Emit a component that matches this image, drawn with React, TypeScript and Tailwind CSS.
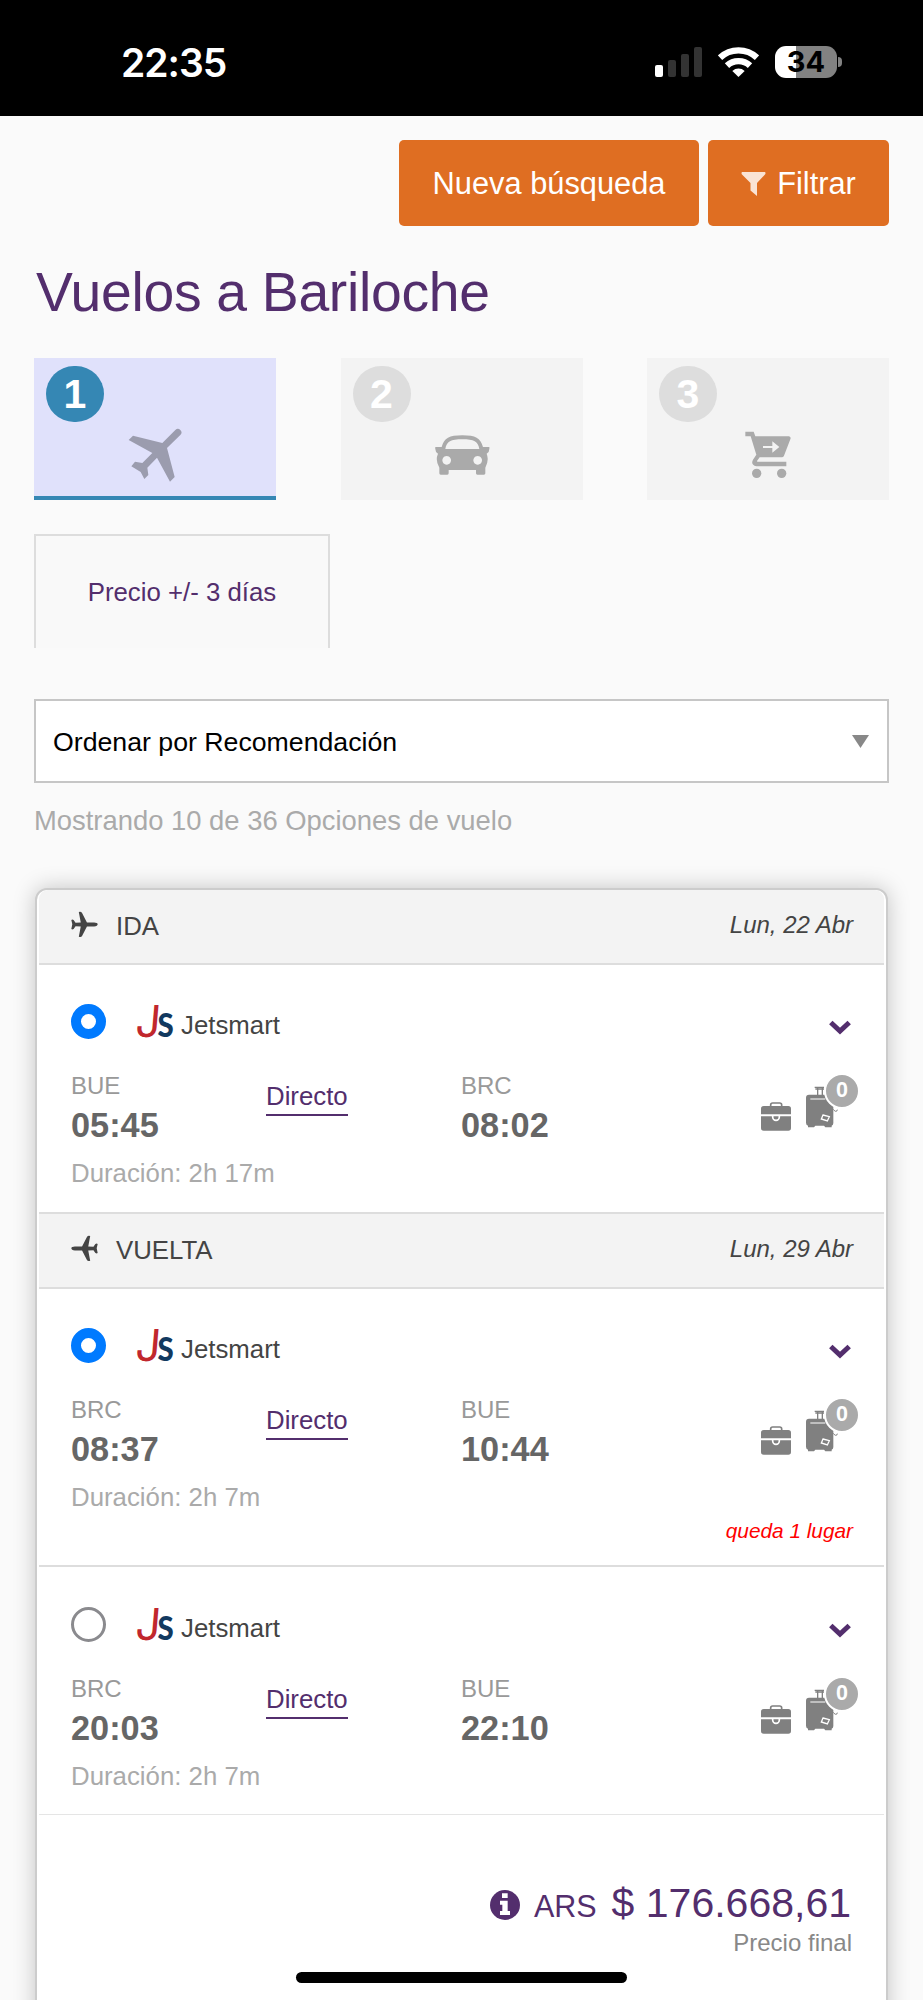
import React from 'react';

interface Flight {
  from: string;
  to: string;
  departs: string;
  arrives: string;
  duration: string;
  selected: boolean;
  seats?: string;
}

const outbound: Flight[] = [
  { from: 'BUE', to: 'BRC', departs: '05:45', arrives: '08:02', duration: '2h 17m', selected: true },
];

const inbound: Flight[] = [
  { from: 'BRC', to: 'BUE', departs: '08:37', arrives: '10:44', duration: '2h 7m', selected: true, seats: 'queda 1 lugar' },
  { from: 'BRC', to: 'BUE', departs: '20:03', arrives: '22:10', duration: '2h 7m', selected: false },
];

const StatusBar = () => (
  <div className="flex h-[116px] items-start bg-black pl-[121px] pr-[81px]">
    <span className="mt-[41px] font-['Inter',sans-serif] text-[39px] leading-[44px] font-semibold tracking-[-1px] text-white">
      22:35
    </span>
    <div className="mt-[46px] ml-auto flex items-start">
      <svg width="47" height="32" viewBox="0 0 47 32" className="mr-[16px]">
        <rect x="0" y="19" width="8" height="12" rx="2" fill="#fff" />
        <rect x="13" y="14" width="8" height="17" rx="2" fill="#333" />
        <rect x="26" y="8" width="8" height="23" rx="2" fill="#333" />
        <rect x="39" y="1" width="8" height="30" rx="2" fill="#333" />
      </svg>
      <svg width="41" height="32" viewBox="0 0 123 96" className="mr-[16px]">
        <g fill="none" stroke="#fff" strokeWidth="19">
          <path d="M6 36 A81 81 0 0 1 117 36" transform="translate(0 -1)" />
          <path d="M27 59 A50 50 0 0 1 96 59" />
        </g>
        <path d="M61.500 93 L43 75 A27 27 0 0 1 80 75 Z" fill="#fff" />
      </svg>
      <div className="flex h-[32px] w-[62px] items-center justify-center rounded-[11px] bg-[linear-gradient(90deg,#fff_21px,#828282_21px)] font-['Inter',sans-serif] text-[29px] leading-[32px] font-bold text-black">
        34
      </div>
      <div className="mt-[11px] ml-[1px] h-[10px] w-[4px] rounded-r-full bg-[#828282]" />
    </div>
  </div>
);

const PlaneIcon = () => (
  <svg width="54" height="54" viewBox="385 262 162 162" fill="currentColor">
    <path d="M387 298 L400 285 L488 307 L527 268 A10.500 10.500 0 0 1 542 283 L502 322 L525 409 L511 423 L472 351 L443 381 L446 403 L434 415 L423 394 L395 377 L406 363 L428 367 L458 337 Z" />
  </svg>
);

const CarIcon = () => (
  <svg width="55" height="40" viewBox="1303 284 165 120" fill="currentColor">
    <path
      fillRule="evenodd"
      d="M1304 320 H1323 C1331 293 1345 285 1385 285 C1425 285 1439 293 1447 320 H1466 Q1468 334 1458 340 Q1466 360 1454 382 V399 Q1454 403 1450 403 H1430 Q1426 403 1426 399 V389 H1344 V399 Q1344 403 1340 403 H1320 Q1316 403 1316 399 V382 Q1303 360 1312 340 Q1302 334 1304 320 Z M1334 326 H1436 C1432 303 1420 297 1385 297 C1350 297 1338 303 1334 326 Z M1338 347 a13 13 0 1 0 0.100 0 Z M1431 347 a13 13 0 1 0 0.100 0 Z"
    />
  </svg>
);

const CartIcon = () => (
  <svg width="46" height="48" viewBox="854 272 138 144" fill="currentColor">
    <path
      fillRule="evenodd"
      d="M855 274 H880 L885 288 H986 Q993 290 990 297 L971 346 Q969 351 964 351 H898 L890 362 Q889 364 892 364 H978 V378 H888 Q870 374 878 358 L888 343 L871 288 H855 Z M908 317 V323 H936 V337 L957 320 L936 303 V317 Z"
    />
    <circle cx="889" cy="399" r="14" />
    <circle cx="964" cy="399" r="14" />
  </svg>
);

const LegPlane = ({ flipped }: { flipped?: boolean }) => (
  <svg width="27" height="27" viewBox="212 794 83 81" fill="#444" className={flipped ? '' : '-scale-x-100'}>
    <path d="M213 834 Q213 828 224 828 H246 L261 799 Q264 794 271 796 L265 828 L281 829 L287 821 Q291 818 294 821 L291 834 L294 848 Q291 851 287 848 L281 840 L265 841 L271 872 Q264 875 261 870 L246 841 H224 Q213 840 213 834 Z" />
  </svg>
);

const JetsmartLogo = () => (
  <svg width="40" height="36" viewBox="0 0 40 36" className="overflow-visible">
    <text transform="translate(-1.500 32.500) skewX(-5)" fontSize="44" fontWeight="400" fill="#c1272d" className="font-['Inter',sans-serif]">
      J
    </text>
    <text transform="translate(21.500 32.500) scale(0.920 1)" fontSize="32" fontWeight="900" fill="#12395f" className="font-['Lato',sans-serif]">
      S
    </text>
  </svg>
);

const BriefcaseIcon = () => (
  <svg width="30" height="29" viewBox="0 0 90 87">
    <path d="M29 16 V9 Q29 3 35 3 H56 Q62 3 62 9 V16" fill="none" stroke="#808080" strokeWidth="5" />
    <path d="M0 37 V20 Q0 12 8 12 H82 Q90 12 90 20 V37 Z M0 43 H90 V78 Q90 86 82 86 H8 Q0 86 0 78 Z" fill="#808080" />
    <path d="M35 41 V45 A10 10 0 0 0 55 45 V41" fill="none" stroke="#fff" strokeWidth="5" />
  </svg>
);

const LuggageIcon = () => (
  <svg width="34" height="43" viewBox="0 0 102 129">
    <g fill="none" stroke="#808080" strokeWidth="4">
      <path d="M26 7 H54 M28 12 H54 M35 8 V32 M49 8 V32" />
      <path d="M78 70 Q92 86 94 74" strokeWidth="3" />
    </g>
    <path d="M0 38 Q0 29 9 29 H73 Q82 29 82 38 V114 Q82 121 77 122 V127 H58 L54 122 H28 L24 127 H6 V122 Q0 120 0 113 Z" fill="#808080" />
    <path d="M13 42 H58" stroke="#fff" strokeWidth="3" />
    <path d="M51 90 L70 95 L64 108 L46 102 Z" fill="none" stroke="#fff" strokeWidth="4" />
  </svg>
);

const Baggage = () => (
  <div className="ml-auto flex items-start pr-[13px]">
    <div className="mt-[31px]">
      <BriefcaseIcon />
    </div>
    <div className="relative mt-[14px] ml-[15px]">
      <LuggageIcon />
      <span className="absolute -top-[12px] left-[18px] flex h-[36px] w-[36px] items-center justify-center rounded-full border-2 border-white bg-[#aaa] text-[21.5px] leading-none font-bold text-white">
        0
      </span>
    </div>
  </div>
);

const LegHeader = ({ label, date, flipped }: { label: string; date: string; flipped?: boolean }) => (
  <div
    className={
      flipped
        ? 'flex h-[77px] items-center border-y-2 border-[#ddd] bg-[#f3f3f3] pr-[31px] pl-[32px]'
        : 'flex h-[75px] items-center rounded-t-[9px] border-b-2 border-[#ddd] bg-[#f3f3f3] pr-[31px] pl-[32px]'
    }
  >
    <div className="-mt-[5px]">
      <LegPlane flipped={flipped} />
    </div>
    <span className="-mt-[2px] ml-[18px] text-[25.8px] leading-[30px] text-[#444]">{label}</span>
    <span className="-mt-[4px] ml-auto text-[24px] leading-[30px] text-[#444] italic">{date}</span>
  </div>
);

const FlightRow = ({ flight }: { flight: Flight }) => (
  <div className={flight.seats ? 'h-[276px] pt-[39px] pr-[31px] pl-[32px]' : 'h-[247px] pt-[39px] pr-[31px] pl-[32px]'}>
    <div className="flex h-[42px] items-start">
      <span
        className={
          flight.selected
            ? 'h-[35px] w-[35px] rounded-full border-[10px] border-[#007aff] bg-white'
            : 'h-[35px] w-[35px] rounded-full border-[3px] border-[#8a8a8e] bg-white'
        }
      />
      <div className="ml-[30px]">
        <JetsmartLogo />
      </div>
      <span className="mt-[6px] ml-[5px] text-[25.8px] leading-[30px] text-[#444]">Jetsmart</span>
      <svg width="24" height="16" viewBox="0 0 24 16" className="mt-[15px] mr-[1px] ml-auto">
        <path d="M2.800 3.500 L12 12 L21.200 3.500" fill="none" stroke="#532e6d" strokeWidth="5" />
      </svg>
    </div>
    <div className="mt-[25px] flex h-[74px] items-start">
      <div className="w-[195px]">
        <div className="text-[24px] leading-[30px] text-[#999]">{flight.from}</div>
        <div className="mt-[4px] text-[34.3px] leading-[40px] font-bold text-[#666]">{flight.departs}</div>
      </div>
      <div className="w-[195px] pt-[10px]">
        <a className="inline-block border-b-2 border-[#532e6d] pb-[3px] text-[25.8px] leading-[30px] text-[#532e6d]">Directo</a>
      </div>
      <div>
        <div className="text-[24px] leading-[30px] text-[#999]">{flight.to}</div>
        <div className="mt-[4px] text-[34.3px] leading-[40px] font-bold text-[#666]">{flight.arrives}</div>
      </div>
      <Baggage />
    </div>
    <div className="mt-[13px] text-[25.8px] leading-[30px] text-[#aaa]">Duración: {flight.duration}</div>
    {flight.seats && (
      <div className="mt-[6px] text-right text-[20.8px] leading-[26px] text-[#f00] italic">{flight.seats}</div>
    )}
  </div>
);

interface StepProps {
  number: number;
  active?: boolean;
  children: React.ReactNode;
}

const Step = ({ number, active, children }: StepProps) => (
  <div
    className={
      active
        ? 'flex h-[142px] w-[242px] flex-col border-b-4 border-[#3587b4] bg-[#e0e1fb] text-[#9b9cae]'
        : 'flex h-[142px] w-[242px] flex-col bg-[#f3f3f3] text-[#aaa]'
    }
  >
    <span
      className={
        active
          ? 'mt-[8px] ml-[12px] flex h-[56px] w-[58px] items-center justify-center rounded-[28px] bg-[#3587b4] text-[41px] leading-[56px] font-bold text-white'
          : 'mt-[8px] ml-[12px] flex h-[56px] w-[58px] items-center justify-center rounded-[28px] bg-[#ddd] text-[41px] leading-[56px] font-bold text-white'
      }
    >
      {number}
    </span>
    {children}
  </div>
);

export default function App() {
  return (
    <div className="relative h-[2000px] w-[923px] overflow-hidden bg-[#fafafa] font-['Liberation_Sans',Arial,sans-serif]">
      <StatusBar />

      <main className="pr-[34px] pl-[34px]">
        <div className="mt-[24px] flex justify-end gap-[9px]">
          <button className="h-[86px] w-[300px] rounded-[5px] bg-[#df6e22] pt-[2px] text-[30.8px] text-white">Nueva búsqueda</button>
          <button className="flex h-[86px] w-[181px] items-center justify-center gap-[11px] rounded-[5px] bg-[#df6e22] pt-[2px] text-[30.8px] text-white">
            <svg width="25" height="25" viewBox="0 0 25 25">
              <path d="M1 0 H24 Q25 1 24 2.500 L16 11 V24 L9.500 18.500 V11 L1 2.500 Q0 1 1 0 Z" fill="#fae3d4" />
            </svg>
            Filtrar
          </button>
        </div>

        <h1 className="mt-[35px] ml-[2px] text-[55.3px] leading-[62px] tracking-[-0.3px] text-[#532e6d]">Vuelos a Bariloche</h1>

        <div className="mt-[35px] flex justify-between">
          <Step number={1} active>
            <div className="mt-[6px] ml-[94px]">
              <PlaneIcon />
            </div>
          </Step>
          <Step number={2}>
            <div className="mt-[13px] ml-[94px]">
              <CarIcon />
            </div>
          </Step>
          <Step number={3}>
            <div className="mt-[9px] ml-[98px]">
              <CartIcon />
            </div>
          </Step>
        </div>

        <div className="mt-[34px] flex h-[114px] w-[296px] items-center justify-center border-2 border-b-0 border-[#ddd] bg-[#f9f9f9] text-[25.8px] text-[#532e6d]">
          Precio +/- 3 días
        </div>

        <div className="mt-[51px] flex h-[84px] items-center justify-between border-2 border-[#c6c6c6] bg-white pr-[18px] pl-[17px]">
          <span className="pt-[2px] text-[26.7px] text-black">Ordenar por Recomendación</span>
          <svg width="17" height="13" viewBox="0 0 17 13">
            <path d="M0 0 H17 L8.500 13 Z" fill="#888" />
          </svg>
        </div>

        <p className="mt-[22px] text-[27.4px] leading-[32px] text-[#aaa]">Mostrando 10 de 36 Opciones de vuelo</p>

        <section className="mt-[51px] mr-[1px] ml-[1px] h-[1200px] rounded-[12px] border-2 border-[#ccc] bg-white px-[2px] shadow-[0_0_22px_rgba(0,0,0,0.22)]">
          <LegHeader label="IDA" date="Lun, 22 Abr" />
          {outbound.map((flight) => (
            <FlightRow key={flight.departs} flight={flight} />
          ))}
          <LegHeader label="VUELTA" date="Lun, 29 Abr" flipped />
          {inbound.map((flight, i) => (
            <div key={flight.departs} className={i > 0 ? 'border-t-2 border-[#ddd] pt-px' : ''}>
              <FlightRow flight={flight} />
            </div>
          ))}

          <div className="-mt-px border-t border-[#e5e5e5] pt-[65px] pr-[32px]">
            <div className="flex items-baseline justify-end text-[#532e6d]">
              <svg width="30" height="30" viewBox="0 0 90 90" className="relative top-[3px] mr-[14px]">
                <circle cx="45" cy="45" r="45" fill="#532e6d" />
                <path d="M36 10 H53 V24 H36 Z M30 32 H53 V63 H60 V75 H30 V63 H37 V44 H30 Z" fill="#fff" />
              </svg>
              <span className="mr-[15px] text-[30.5px] leading-[46px]">ARS</span>
              <span className="mr-[1px] text-[41px] leading-[46px]">$ 176.668,61</span>
            </div>
            <div className="-mt-px text-right text-[24px] leading-[30px] text-[#888]">Precio final</div>
          </div>
        </section>
      </main>

      {/* home indicator floats over the page */}
      <div className="absolute top-[1972px] left-[296px] h-[11px] w-[331px] rounded-full bg-black" />
    </div>
  );
}
